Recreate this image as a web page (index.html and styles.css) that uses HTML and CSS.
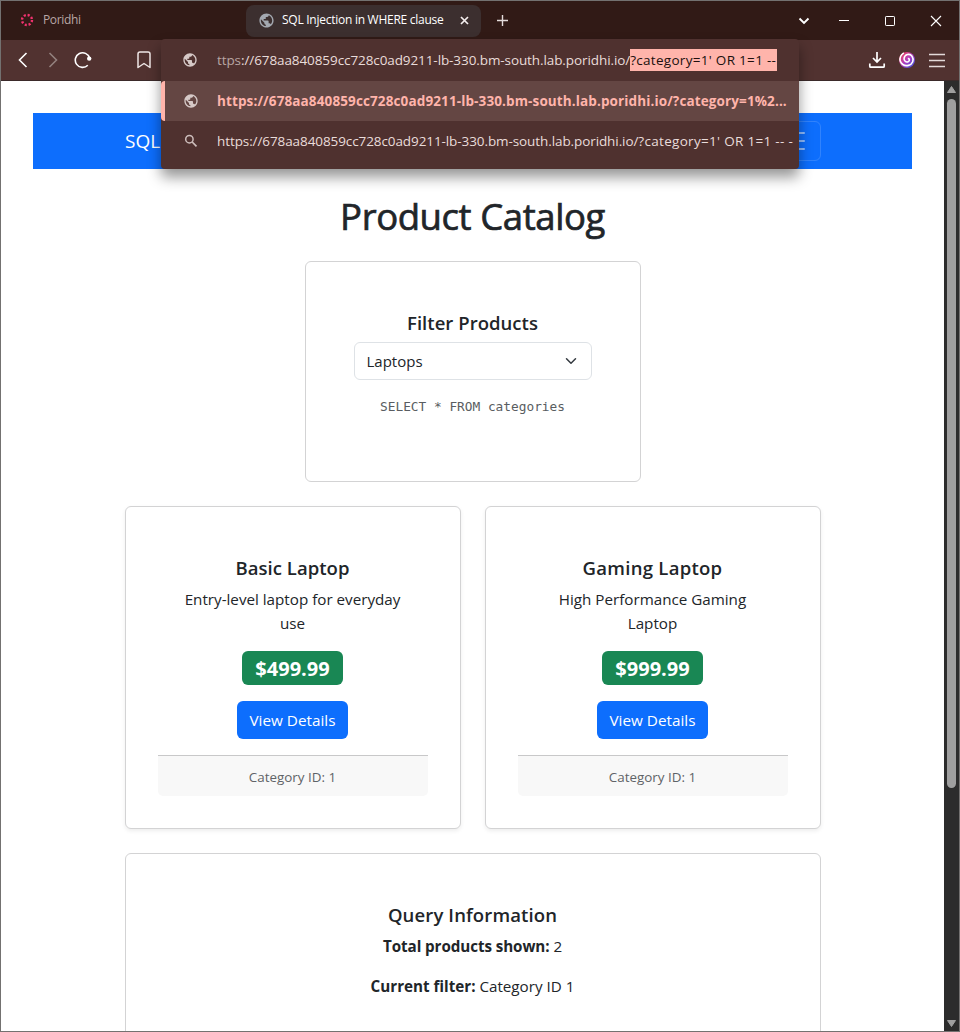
FILE: index.html
```html
<!DOCTYPE html>
<html lang="en">
<head>
<meta charset="utf-8">
<title>SQL Injection in WHERE clause</title>
<link rel="stylesheet" href="styles.css">
</head>
<body>
<svg class="defs" width="0" height="0">
  <symbol id="globe" viewBox="0 0 24 24"><path d="M12 2C6.48 2 2 6.48 2 12s4.48 10 10 10 10-4.48 10-10S17.52 2 12 2zm-1 17.93c-3.95-.49-7-3.85-7-7.93 0-.62.08-1.21.21-1.79L9 15v1c0 1.1.9 2 2 2v1.93zm6.9-2.54c-.26-.81-1-1.39-1.9-1.39h-1v-3c0-.55-.45-1-1-1H8v-2h2c.55 0 1-.45 1-1V7h2c1.1 0 2-.9 2-2v-.41c2.93 1.19 5 4.06 5 7.41 0 2.08-.8 3.97-2.1 5.39z" fill="currentColor"/></symbol>
</svg>
<div class="window">
  <header class="tabs">
    <div class="tab tab-idle">
      <svg class="ring" width="14" height="14" viewBox="0 0 14 14"><circle cx="7" cy="7" r="5" fill="none" stroke="#f0326e" stroke-width="2.4" stroke-dasharray="2.1 1.83"/></svg>
      <span class="t-poridhi">Poridhi</span>
    </div>
    <div class="tab tab-active">
      <svg class="tab-globe" width="17" height="17"><use href="#globe"/></svg>
      <span class="t-tab">SQL Injection in WHERE clause</span>
      <svg class="tab-close" width="9" height="9" viewBox="0 0 9 9"><path d="M1 1l7 7M8 1l-7 7" stroke="#f4eeee" stroke-width="1.7"/></svg>
    </div>
    <svg class="new-tab" width="11" height="11" viewBox="0 0 11 11"><path d="M5.5 0v11M0 5.5h11" stroke="#e4dcdb" stroke-width="1.4"/></svg>
    <div class="controls">
      <svg class="tab-menu" width="12" height="10" viewBox="0 0 12 10"><path d="M1.5 2.5L6 7l4.500-4.500" fill="none" stroke="#fff" stroke-width="1.9"/></svg>
      <svg width="12" height="10" viewBox="0 0 12 10"><path d="M1 4.500h10" stroke="#fff"/></svg>
      <svg width="12" height="12" viewBox="0 0 12 12"><rect x="1.500" y="1.500" width="9" height="9" rx=".7" fill="none" stroke="#fff"/></svg>
      <svg width="12" height="12" viewBox="0 0 12 12"><path d="M1 1l10 10M11 1L1 11" stroke="#fff" stroke-width="1.100"/></svg>
    </div>
  </header>
  <div class="toolbar">
    <svg class="back" width="10" height="16" viewBox="0 0 10 16"><path d="M8.500 1L1.500 8l7 7" fill="none" stroke="#fff" stroke-width="1.600"/></svg>
    <svg class="forward" width="10" height="16" viewBox="0 0 10 16"><path d="M1.500 1l7 7-7 7" fill="none" stroke="#93807e" stroke-width="1.600"/></svg>
    <svg class="reload" width="18" height="18" viewBox="0 0 18 18"><path d="M13.800 14.200A7.300 7.300 0 1 1 15.600 7" fill="none" stroke="#fff" stroke-width="1.600"/><circle cx="15.200" cy="7.600" r="2.200" fill="#fff"/></svg>
    <svg class="bookmark" width="14" height="18" viewBox="0 0 14 18"><path d="M1 3a2 2 0 0 1 2-2h8a2 2 0 0 1 2 2v13.500l-6-4-6 4z" fill="none" stroke="#eee6e5" stroke-width="1.500" stroke-linejoin="round"/></svg>
    <div class="tools">
      <svg width="18" height="18" viewBox="0 0 18 18"><path d="M9 1v10M5 7l4 4 4-4M1.800 12.500v2.700q0 1 1 1h12.400q1 0 1-1v-2.700" fill="none" stroke="#fff" stroke-width="1.700"/></svg>
      <svg width="18" height="18" viewBox="0 0 18 18">
        <defs><linearGradient id="swirl" x1="0" y1="0" x2="1" y2="1"><stop offset=".1" stop-color="#f0445c"/><stop offset=".5" stop-color="#b03bc0"/><stop offset=".9" stop-color="#4c55e0"/></linearGradient></defs>
        <circle cx="9" cy="9" r="8" fill="url(#swirl)"/>
        <path d="M9.800 7.600c1.600-.3 2.200 1.600.8 2.700-2.300 1.700-5-.2-4.500-3.200C6.800 3.300 11.600 2.100 14 5.200c2.500 3.600.6 8.300-3.600 9.200-3.300.7-6.600-1-8.200-4.300M5.800 1.800C2.500 4 1.500 7 2.200 10.100" fill="none" stroke="#fff" stroke-width="1.600"/>
      </svg>
      <svg width="18" height="18" viewBox="0 0 18 18"><path d="M1 3.500h16M1 9.500h16M1 15.500h16" stroke="#e4dad9" stroke-width="1.600"/></svg>
    </div>
  </div>
  <div class="viewport">
    <main class="page">
      <nav class="navbar">
        <span class="brand">SQL</span>
        <span class="toggler"><svg width="30" height="30" viewBox="0 0 30 30"><path d="M4 7h22M4 15h22M4 23h22" stroke="#fff" stroke-opacity=".55" stroke-width="2" stroke-linecap="round"/></svg></span>
      </nav>
      <div class="container">
        <h1>Product Catalog</h1>
        <section class="card filter">
          <h5>Filter Products</h5>
          <div class="select"><span>Laptops</span><svg width="16" height="12" viewBox="0 0 16 16"><path d="m2 5 6 6 6-6" fill="none" stroke="#343a40" stroke-width="2" stroke-linecap="round" stroke-linejoin="round"/></svg></div>
          <code>SELECT * FROM categories</code>
        </section>
        <div class="products">
          <article class="card product">
            <h5>Basic Laptop</h5>
            <p>Entry-level laptop for everyday<br>use</p>
            <span class="price">$499.99</span>
            <span class="button">View Details</span>
            <footer>Category ID: 1</footer>
          </article>
          <article class="card product">
            <h5 class="t-gaming">Gaming Laptop</h5>
            <p>High Performance Gaming<br>Laptop</p>
            <span class="price">$999.99</span>
            <span class="button">View Details</span>
            <footer>Category ID: 1</footer>
          </article>
        </div>
        <section class="card query">
          <h5 class="t-query">Query Information</h5>
          <p class="t-total"><strong>Total products shown:</strong> 2</p>
          <p><strong>Current filter:</strong> Category ID 1</p>
        </section>
      </div>
    </main>
    <aside class="scrollbar">
      <svg width="9" height="7" viewBox="0 0 9 7"><path d="M4.500.5L8.500 6.500h-8z" fill="#9f9f9f" stroke="#9f9f9f" stroke-linejoin="round"/></svg>
      <div class="thumb"></div>
      <svg class="down" width="9" height="7" viewBox="0 0 9 7"><path d="M4.500 6.500L.5.500h8z" fill="#9f9f9f" stroke="#9f9f9f" stroke-linejoin="round"/></svg>
    </aside>
  </div>
  <div class="omnibox">
    <div class="row row-input">
      <svg width="16" height="16"><use href="#globe"/></svg>
      <span class="url"><i>ttps</i>://678aa840859cc728c0ad9211-lb-330.bm-south.lab.poridhi.io/</span><mark>?category=1' OR 1=1 --</mark>
    </div>
    <div class="row row-match">
      <svg width="16" height="16"><use href="#globe"/></svg>
      <b>https://678aa840859cc728c0ad9211-lb-330.bm-south.lab.poridhi.io/?category=1%2...</b>
    </div>
    <div class="row row-search">
      <svg width="16" height="16" viewBox="0 0 16 16"><circle cx="6.400" cy="6.200" r="3.700" fill="none" stroke="#cdbdbb" stroke-width="1.500"/><path d="M9.200 9l4.300 4.300" stroke="#cdbdbb" stroke-width="1.700"/></svg>
      <span class="url">https://678aa840859cc728c0ad9211-lb-330.bm-south.lab.poridhi.io/</span><span class="params">?category=1' OR 1=1 -- -</span>
    </div>
  </div>
</div>
</body>
</html>
```
FILE: styles.css
```css
* { box-sizing: border-box; }
body { margin: 0; font-family: "Open Sans", "Noto Sans", sans-serif; color: #212529; }
svg { display: block; flex: none; }
.defs { position: absolute; }
.window { position: relative; width: 960px; height: 1032px; border: 1px solid #737170; display: flex; flex-direction: column; overflow: hidden; background: #fff; }

.tabs { height: 39px; flex: none; background: #311a16; display: flex; align-items: center; font-size: 12px; white-space: nowrap; }
.tab { display: flex; align-items: center; height: 32px; line-height: 16px; padding-bottom: 1px; }
.tab-idle { width: 245px; padding-left: 19px; color: #b9a7a5; }
.t-poridhi { letter-spacing: -.35px; }
.ring { margin-right: 9px; }
.tab-active { width: 235px; padding-left: 12px; border-radius: 8px; background: #3c2f2f; color: #fff; }
.tab-globe { color: #a3a8b0; margin-right: 7px; }
.t-tab { width: 178px; letter-spacing: -.26px; }
.new-tab { margin-left: 16px; }
.controls { display: flex; gap: 34px; margin-left: auto; padding-right: 17px; align-items: center; }
.tab-menu { margin-right: -6px; }

.toolbar { height: 41px; flex: none; background: #513230; border-bottom: 1px solid #3b2a2a; display: flex; align-items: center; padding-left: 17px; }
.forward { margin-left: 20px; }
.reload { margin-left: 16px; }
.bookmark { margin-left: 45px; }
.tools { display: flex; gap: 12px; margin-left: auto; padding-right: 13px; }

.viewport { flex: 1; display: flex; min-height: 0; }
.page { width: 943px; padding: 32px 32px 0; overflow: hidden; }
.navbar { height: 56px; background: #0d6efd; padding: 0 91px 0 92px; display: flex; align-items: center; justify-content: space-between; }
.brand { color: #fff; font-size: 19px; }
.toggler { width: 56px; height: 40px; border: 1px solid rgba(255,255,255,.15); border-radius: 6px; display: flex; align-items: center; justify-content: center; }
.container { width: 696px; margin: 0 auto; display: flex; flex-direction: column; text-align: center; }
h1 { height: 92px; margin: 0; padding-top: 23px; font-size: 36.500px; font-weight: 400; line-height: 48px; white-space: nowrap; letter-spacing: -.42px; -webkit-text-stroke: .7px #212529; }
.card { border: 1px solid #d3d3d4; border-radius: 6px; padding: 49px 48px 48px; background: #fff; }
h5 { margin: 0 0 7px; font-size: 18.500px; font-weight: 600; line-height: 24px; white-space: nowrap; letter-spacing: .04px; }
.t-gaming { letter-spacing: .28px; }
.t-query { letter-spacing: .13px; }
p { margin: 0 0 16px; font-size: 15.200px; line-height: 24px; white-space: nowrap; }
.t-total { letter-spacing: -.08px; }
.filter { width: 336px; height: 221px; align-self: center; }
.select { height: 38px; border: 1px solid #dee2e6; border-radius: 6px; padding: 0 12px; display: flex; justify-content: space-between; align-items: center; font-size: 15px; line-height: 24px; }
code { display: block; margin-top: 16px; font-family: "DejaVu Sans Mono", monospace; font-size: 12.800px; line-height: 21px; color: #595d61; white-space: nowrap; }
.products { display: grid; grid-template-columns: 336px 336px; gap: 24px; margin: 24px 0; }
.product { height: 323px; padding: 49px 32px 32px; display: flex; flex-direction: column; align-items: center; box-shadow: 0 2px 4px rgba(0,0,0,.075); }
.price { width: 101px; height: 34px; border-radius: 6px; background: #198754; color: #fff; font-size: 20px; font-weight: 700; line-height: 35px; }
.button { width: 111px; height: 38px; margin: 16px 0; border-radius: 6px; background: #0d6efd; color: #fff; font-size: 15.300px; line-height: 38px; white-space: nowrap; }
footer { width: 270px; height: 41px; border-top: 1px solid #c8c8c9; border-radius: 0 0 5px 5px; background: #f8f8f8; color: #5f6367; font-size: 13.400px; line-height: 43px; }
.query { height: 230px; }

.scrollbar { width: 15px; background: #2c2c2c; display: flex; flex-direction: column; align-items: center; padding: 5px 0 4px; }
.thumb { width: 9px; height: 689px; margin-top: 6px; border-radius: 5px; background: #9f9f9f; }
.down { margin-top: auto; }

.omnibox { position: absolute; left: 160px; top: 38px; width: 638px; height: 130px; background: #4f312f; border-radius: 4px; box-shadow: 0 8px 14px rgba(0,0,0,.42); color: #e9dcda; font-size: 13.500px; white-space: nowrap; }
.row { display: flex; align-items: center; height: 40px; padding-left: 22px; }
.row svg { color: #d6c9c7; margin-right: 18px; }
.row-input { height: 42px; padding-left: 21px; }
.row-input svg { margin-right: 19px; }
.url { letter-spacing: -.09px; }
.params { letter-spacing: .31px; }
i { font-style: normal; color: #b8a5a3; }
mark { width: 147px; background: #ffb4ab; color: #20100e; height: 22px; line-height: 22px; letter-spacing: .3px; }
.row-match { background: #644643; border-left: 4px solid #ffb4ab; border-radius: 4px 0 0 4px; padding-left: 18px; color: #ffb4ab; letter-spacing: .12px; }
```
